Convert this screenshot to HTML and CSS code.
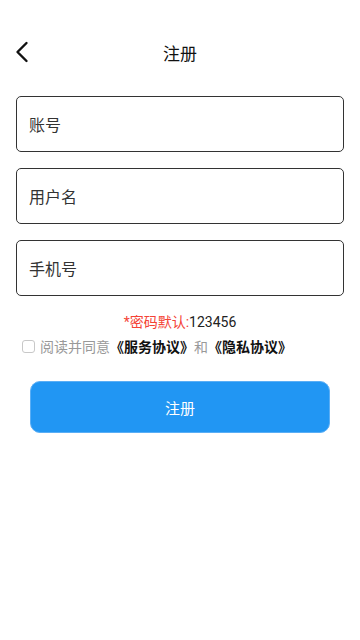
FILE: index.html
```html
<!DOCTYPE html>
<html lang="zh-CN">
<head>
    <meta charset="UTF-8">
    <meta name="viewport" content="width=device-width, initial-scale=1.0">
    <title>注册</title>
    <link rel="stylesheet" href="styles.css">
</head>
<body>
    <div class="page">
        <div class="header">
            <span class="back">
                <svg width="14" height="22" viewBox="0 0 14 22">
                    <path d="M11.5 2 L2.5 11 L11.5 20" fill="none" stroke="#111" stroke-width="2.4" stroke-linecap="round" stroke-linejoin="round"/>
                </svg>
            </span>
            <h1>注册</h1>
        </div>

        <div class="form">
            <div class="field">账号</div>
            <div class="field">用户名</div>
            <div class="field">手机号</div>
        </div>

        <p class="hint"><span class="red">*密码默认:</span>123456</p>

        <div class="agree">
            <span class="check"></span>
            <span class="gray">阅读并同意</span><b>《服务协议》</b><span class="gray">和</span><b>《隐私协议》</b>
        </div>

        <div class="btn">注册</div>
    </div>
</body>
</html>
```

FILE: styles.css
```css
* {
    padding: 0;
    margin: 0;
    box-sizing: border-box;
}

body {
    background: #fff;
    font-family: Roboto, "Noto Sans CJK SC", sans-serif;
    color: #222;
}

.page {
    padding-top: 28px;
}

.header {
    height: 48px;
    display: flex;
    align-items: center;
    justify-content: center;
    position: relative;
}

.header .back {
    position: absolute;
    left: 15px;
    top: 13px;
    width: 14px;
    height: 22px;
}

.header h1 {
    font-size: 17px;
    font-weight: normal;
    color: #111;
}

.form {
    margin: 20px 16px 0;
    display: flex;
    flex-direction: column;
    gap: 16px;
}

.field {
    height: 56px;
    border: 1px solid #333;
    border-radius: 5px;
    padding-left: 12px;
    display: flex;
    align-items: center;
    font-size: 16px;
    color: #333;
}

.hint {
    margin-top: 16px;
    line-height: 20px;
    text-align: center;
    font-size: 14px;
    color: #222;
}

.hint .red {
    color: #f44336;
}

.agree {
    margin-top: 4px;
    padding-left: 22px;
    height: 20px;
    display: flex;
    align-items: center;
    font-size: 14px;
}

.agree .check {
    width: 13px;
    height: 13px;
    border: 1px solid #c8c8c8;
    border-radius: 3px;
    margin-right: 5px;
}

.agree .gray {
    color: #999;
}

.agree b {
    color: #111;
}

.btn {
    margin: 25px 30px 0;
    height: 52px;
    border-radius: 10px;
    background: #2196f3;
    border: 1px solid #5aaef5;
    color: #fff;
    font-size: 15px;
    display: flex;
    align-items: center;
    justify-content: center;
}
```
